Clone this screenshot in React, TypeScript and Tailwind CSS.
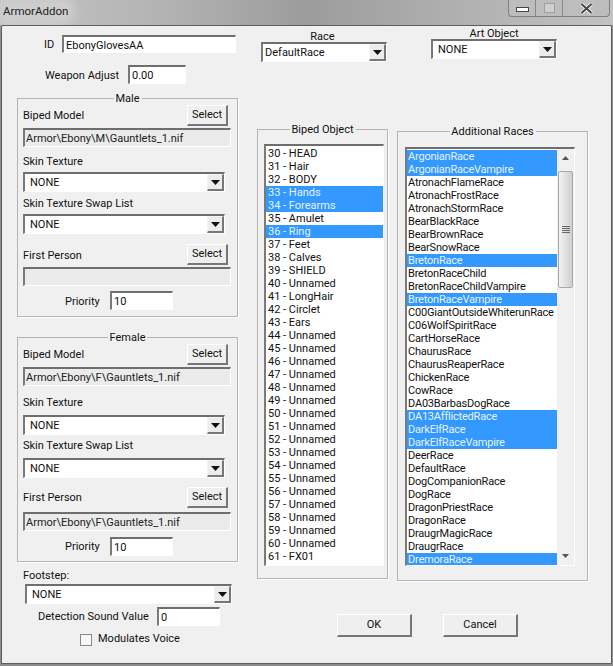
import React from "react";

const sunken = "border-t-2 border-l-2 border-t-[#6e6e6e] border-l-[#7a7a7a] border-r border-b border-r-white border-b-white";

function Field({ text, className = "" }: { text: string; className?: string }) {
  return (
    <div className={`flex items-center bg-white pl-[2px] pt-[1px] leading-none ${sunken} ${className}`}>{text}</div>
  );
}

function ReadOnly({ text }: { text: string }) {
  return (
    <div className="flex h-[19px] w-[208px] items-center border-t-2 border-l-2 border-t-[#6e6e6e] border-l-[#7a7a7a] border-r border-b border-r-white border-b-white bg-[#ebebeb] pl-[1px] leading-none text-[#222]">
      {text}
    </div>
  );
}

function Combo({ text, className = "", inset = "pl-[5px]" }: { text: string; className?: string; inset?: string }) {
  return (
    <div className={`flex items-center justify-between bg-white ${sunken} ${className}`}>
      <span className={`leading-none ${inset}`}>{text}</span>
      <span className="flex h-full w-[17px] items-center justify-center border-t border-l border-t-[#f4f4f4] border-l-[#f4f4f4] border-r-2 border-b-2 border-r-[#777] border-b-[#777] bg-[#ececec]">
        <svg width="9" height="5" viewBox="0 0 9 5"><path d="M0 0h9L4.5 5z" fill="#111" /></svg>
      </span>
    </div>
  );
}

function Btn({ text, className = "" }: { text: string; className?: string }) {
  return (
    <div className={`flex items-center justify-center border border-t-white border-l-white border-r-2 border-b-2 border-r-[#777] border-b-[#777] bg-[#efefef] ${className}`}>
      {text}
    </div>
  );
}

function Group({ title, className = "", children }: { title: string; className?: string; children: React.ReactNode }) {
  return (
    <div className={`relative border border-[#b4b4b4] shadow-[1px_1px_0_#fff] ${className}`}>
      <span className="absolute left-1/2 top-[-7px] -translate-x-1/2 whitespace-nowrap bg-[#f0f0f0] px-[2px] leading-[14px]">{title}</span>
      {children}
    </div>
  );
}

function Row({ text, selected, inset }: { text: string; selected: boolean; inset: string }) {
  return (
    <div className={`h-[13px] whitespace-nowrap leading-[13px] ${inset} ${selected ? "bg-[#3399ff] text-[#e6f2ff]" : ""}`}>{text}</div>
  );
}

function ArmorPanel({ title, second, female }: { title: string; second: string; female?: boolean }) {
  return (
    <Group title={title} className={`w-[221px] px-[5px] ${female ? "mt-[20px] h-[225px]" : "mt-[14px] h-[219px]"}`}>
      <div className="mt-[6px] flex h-[21px] items-center justify-between pr-[4px]">
        <span className="pt-[2px]">Biped Model</span>
        <Btn text="Select" className="h-[21px] w-[41px]" />
      </div>
      <div className="mt-[2px]"><ReadOnly text={title === "Male" ? "Armor\\Ebony\\M\\Gauntlets_1.nif" : "Armor\\Ebony\\F\\Gauntlets_1.nif"} /></div>
      <div className={`${female ? "mt-[9px]" : "mt-[7px]"} leading-[15px]`}>Skin Texture</div>
      <Combo text="NONE" className={`${female ? "mt-[5px]" : "mt-[3px]"} h-[20px] w-[202px]`} />
      <div className={`${female ? "mt-[3px]" : "mt-[4px]"} leading-[15px]`}>Skin Texture Swap List</div>
      <Combo text="NONE" className={`${female ? "mt-[5px]" : "mt-[3px]"} h-[20px] w-[202px]`} />
      <div className={`${female ? "mt-[9px]" : "mt-[10px]"} flex h-[21px] items-center justify-between pr-[4px]`}>
        <span className={female ? "pt-[2px]" : "pt-[4px]"}>First Person</span>
        <Btn text="Select" className="h-[21px] w-[41px]" />
      </div>
      <div className={female ? "mt-[4px]" : "mt-[2px]"}><ReadOnly text={second} /></div>
      <div className={`${female ? "mt-[6px]" : "mt-[5px]"} flex h-[19px] items-center`}>
        <span className={`ml-[42px] w-[45px] ${female ? "pt-[2px]" : "pt-[4px]"}`}>Priority</span>
        <Field text="10" className="h-[19px] w-[63px]" />
      </div>
    </Group>
  );
}

const bipedNames = ["HEAD","Hair","BODY","Hands","Forearms","Amulet","Ring","Feet","Calves","SHIELD","Unnamed","LongHair","Circlet","Ears","Unnamed","Unnamed","Unnamed","Unnamed","Unnamed","Unnamed","Unnamed","Unnamed","Unnamed","Unnamed","Unnamed","Unnamed","Unnamed","Unnamed","Unnamed","Unnamed","Unnamed","FX01"];
const bipedSelected = [33, 34, 36];
const races = ["ArgonianRace","ArgonianRaceVampire","AtronachFlameRace","AtronachFrostRace","AtronachStormRace","BearBlackRace","BearBrownRace","BearSnowRace","BretonRace","BretonRaceChild","BretonRaceChildVampire","BretonRaceVampire","C00GiantOutsideWhiterunRace","C06WolfSpiritRace","CartHorseRace","ChaurusRace","ChaurusReaperRace","ChickenRace","CowRace","DA03BarbasDogRace","DA13AfflictedRace","DarkElfRace","DarkElfRaceVampire","DeerRace","DefaultRace","DogCompanionRace","DogRace","DragonPriestRace","DragonRace","DraugrMagicRace","DraugrRace","DremoraRace"];
const raceSelected = ["ArgonianRace","ArgonianRaceVampire","BretonRace","BretonRaceVampire","DA13AfflictedRace","DarkElfRace","DarkElfRaceVampire","DremoraRace"];

export default function App() {
  return (
    <div className="flex h-[666px] w-[613px] flex-col overflow-hidden bg-[#8c8c8c] font-['Roboto',sans-serif] text-[11px] text-[#111]">
      <div className="flex h-[25px] shrink-0 items-start justify-between bg-[linear-gradient(90deg,#c4c4c4_0%,#b4b4b4_25%,#9c9c9c_50%,#b0b0b0_75%,#c2c2c2_100%)]">
        <span className="mt-[3px] ml-[2px] rounded-[6px] bg-[#cdcdcd] px-[1px] text-[11.5px] leading-[17px] text-[#222] shadow-[0_0_8px_6px_#cdcdcd]">ArmorAddon</span>
        <div className="mr-[3px] flex h-[17px] w-[102px] rounded-b-[4px] border border-t-0 border-[#7f7f7f] bg-[#bdbdbd]">
          <div className="flex w-[27px] items-center justify-center border-r border-[#888]">
            <div className="mt-[3px] h-[5px] w-[13px] border border-[#444] bg-white" />
          </div>
          <div className="flex w-[27px] items-center justify-center border-r border-[#888]">
            <div className="h-[10px] w-[11px] border border-[#a0a0a0] bg-[#cfcfcf]" />
          </div>
          <div className="flex flex-1 items-center justify-center">
            <svg width="13" height="11" viewBox="0 0 13 11">
              <path d="M1.5 1l10 9M11.5 1l-10 9" stroke="#fff" strokeWidth="3.6" />
              <path d="M1.5 1l10 9M11.5 1l-10 9" stroke="#444" strokeWidth="2" />
            </svg>
          </div>
        </div>
      </div>
      <div className="mx-[1px] mb-[2px] flex flex-1 rounded-t-[2px] border border-[#5e5e5e] bg-[#f0f0f0] pl-[15px]">
        <div className="flex w-[221px] shrink-0 flex-col">
          <div className="mt-[9px] flex h-[18px] items-center">
            <span className="ml-[27px] w-[18px] pt-[2px]">ID</span>
            <Field text="EbonyGlovesAA" className="h-[18px] w-[174px]" />
          </div>
          <div className="mt-[12px] flex h-[19px] items-center">
            <span className="ml-[28px] w-[83px] pt-[4px]">Weapon Adjust</span>
            <Field text="0.00" className="h-[19px] w-[58px]" />
          </div>
          <ArmorPanel title="Male" second="" />
          <ArmorPanel title="Female" second="Armor\Ebony\F\Gauntlets_1.nif" female />
          <div className="mt-[7px] ml-[6px] leading-[14px]">Footstep:</div>
          <Combo text="NONE" className="mt-[1px] ml-[8px] h-[20px] w-[207px]" />
          <div className="mt-[3px] flex h-[19px] items-center">
            <span className="ml-[21px] w-[119px] whitespace-nowrap pt-[2px]">Detection Sound Value</span>
            <Field text="0" className="h-[19px] w-[63px]" />
          </div>
          <div className="mt-[8px] ml-[63px] flex items-start">
            <span className="h-[12px] w-[12px] border border-[#8a8a8a] bg-[#f6f6f6]" />
            <span className="ml-[6px] -mt-[2px] leading-[13px]">Modulates Voice</span>
          </div>
        </div>
        <div className="ml-[19px] flex flex-col">
          <div className="flex h-[103px]">
            <div className="mt-[4px] flex w-[131px] flex-col">
              <span className="self-center leading-[14px]">Race</span>
              <Combo text="DefaultRace" inset="pl-[2px]" className="-mt-[2px] ml-[4px] h-[20px] w-[126px]" />
            </div>
            <div className="mt-[1px] ml-[43px] flex w-[126px] flex-col items-center">
              <span className="leading-[14px]">Art Object</span>
              <Combo text="NONE" className="-mt-[2px] h-[20px] w-[126px]" />
            </div>
          </div>
          <div className="flex">
            <Group title="Biped Object" className="h-[450px] w-[131px]">
              <div className={`mt-[14px] ml-[6px] h-[422px] w-[120px] bg-white pt-[1px] ${sunken}`}>
                {bipedNames.map((n, i) => (
                  <Row key={i} inset="pl-[2px]" text={`${30 + i} - ${n}`} selected={bipedSelected.includes(30 + i)} />
                ))}
              </div>
            </Group>
            <Group title="Additional Races" className="mt-[2px] ml-[9px] h-[450px] w-[191px]">
              <div className={`mt-[15px] ml-[7px] flex h-[419px] w-[170px] bg-white ${sunken}`}>
                <div className="w-[151px] overflow-hidden pt-[1px] tracking-[-0.2px]">
                  {races.map((r) => (
                    <Row key={r} inset="pl-[1px]" text={r} selected={raceSelected.includes(r)} />
                  ))}
                </div>
                <div className="flex w-[17px] flex-col items-center bg-[#f0f0f0]">
                  <svg className="mt-[7px]" width="7" height="4" viewBox="0 0 7 4"><path d="M3.5 0L7 4H0z" fill="#555" /></svg>
                  <div className="mt-[11px] flex h-[117px] w-[15px] flex-col items-center justify-center gap-[1px] rounded-[2px] border border-[#a8a8a8] bg-gradient-to-r from-[#f2f2f2] to-[#cfcfcf]">
                    <div className="h-[1px] w-[8px] bg-[#666]" />
                    <div className="h-[1px] w-[8px] bg-[#666]" />
                    <div className="h-[1px] w-[8px] bg-[#666]" />
                    <div className="h-[1px] w-[8px] bg-[#666]" />
                  </div>
                  <svg className="mt-auto mb-[7px]" width="7" height="4" viewBox="0 0 7 4"><path d="M0 0h7L3.5 4z" fill="#555" /></svg>
                </div>
              </div>
            </Group>
          </div>
          <div className="mt-[33px] ml-[80px] flex gap-[31px]">
            <Btn text="OK" className="h-[23px] w-[75px]" />
            <Btn text="Cancel" className="h-[23px] w-[75px]" />
          </div>
        </div>
      </div>
    </div>
  );
}
